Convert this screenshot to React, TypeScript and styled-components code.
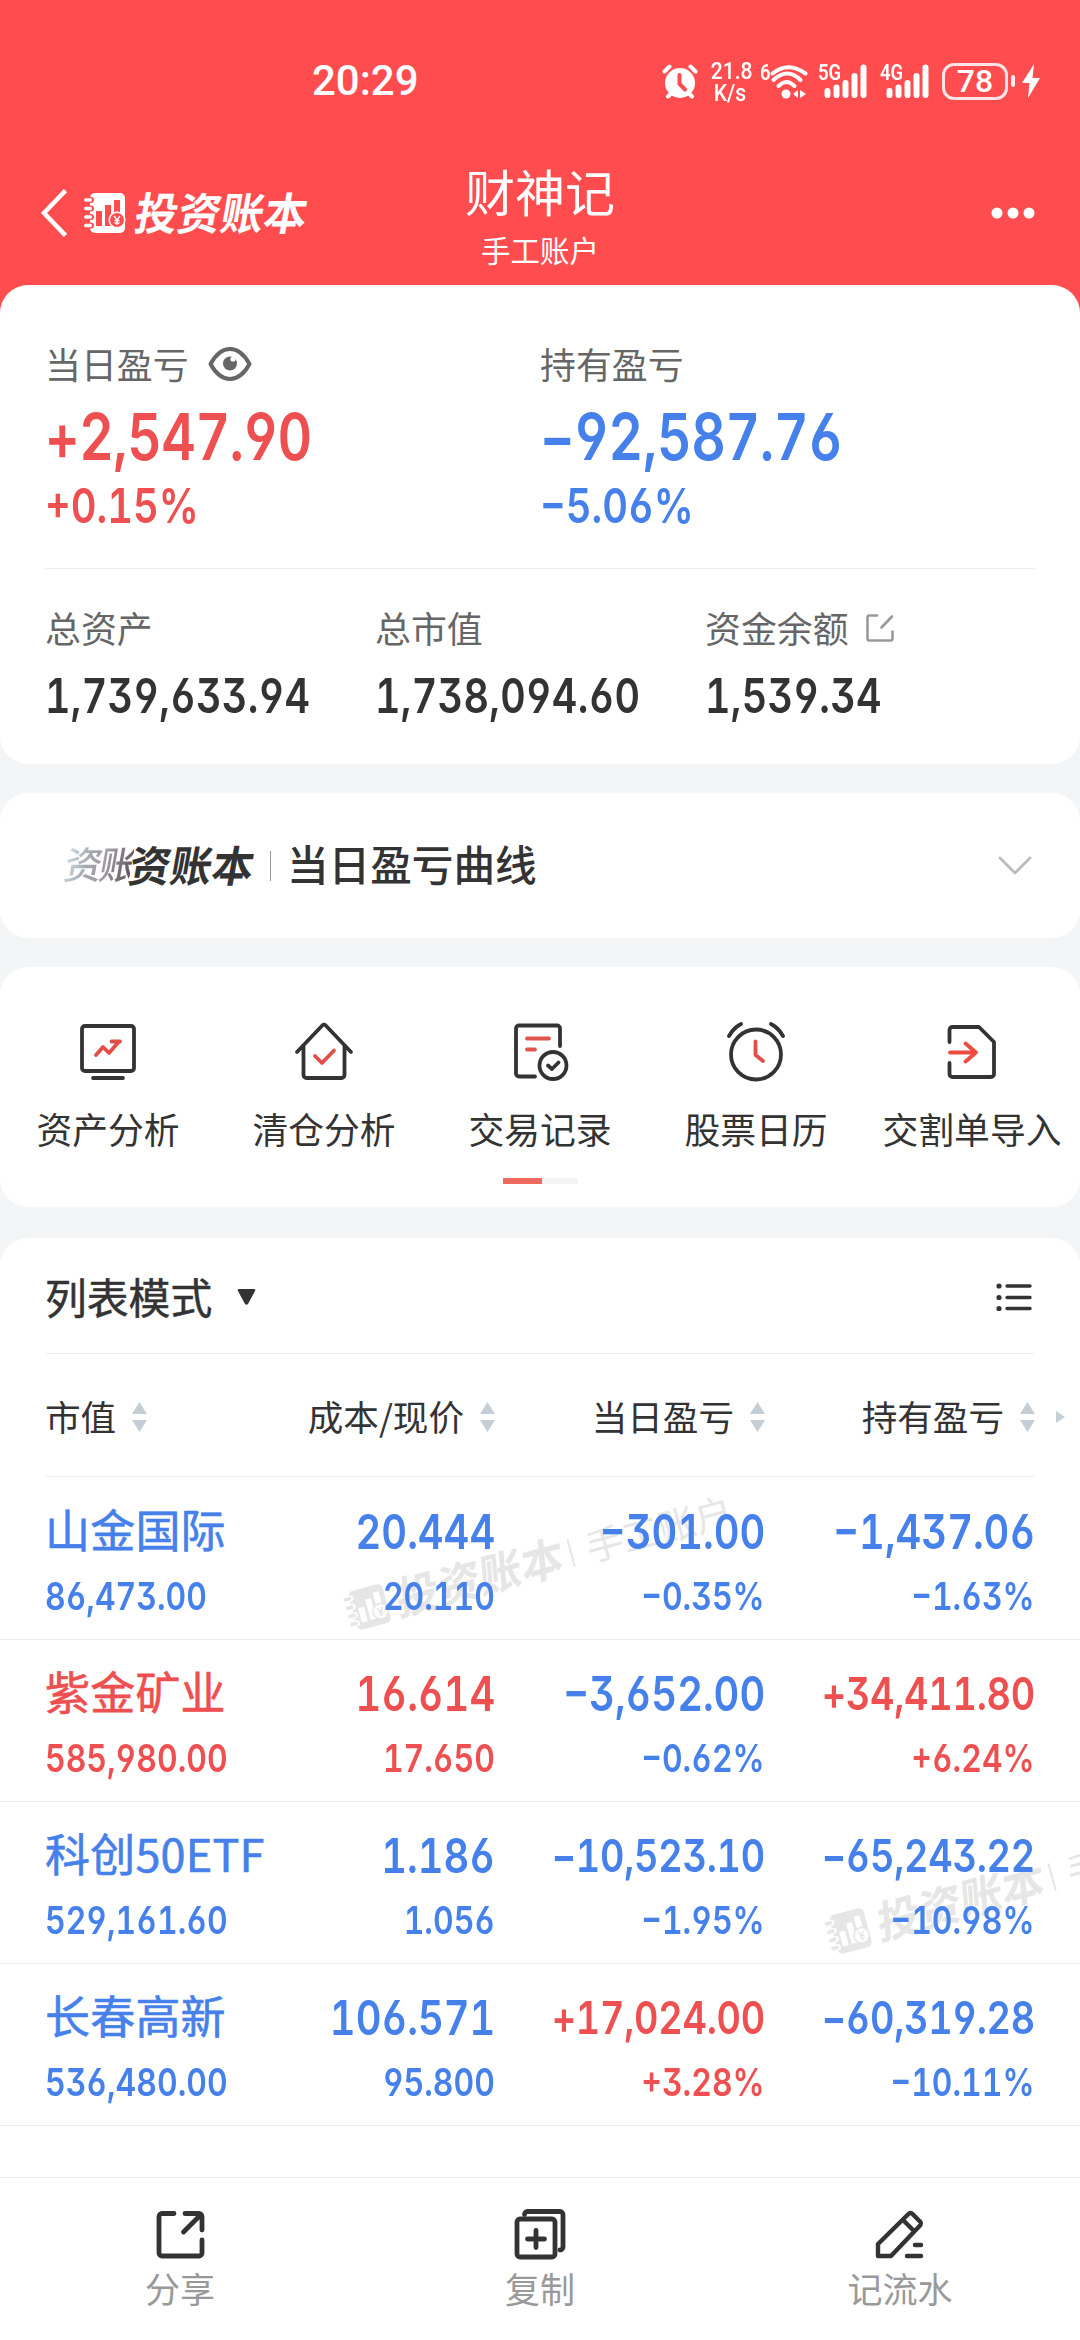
import React from "react";
import styled, { createGlobalStyle } from "styled-components";

const INK = "#333333";
const RED = "#ee4f50";
const BLUE = "#4680ea";
const CJK = `"Noto Sans CJK SC", "Noto Sans", sans-serif`;

const GlobalStyle = createGlobalStyle`
  * { box-sizing: border-box; }
  body { margin: 0; background: #f3f5f7; }
  svg { display: block; flex: none; }
`;

const Screen = styled.div`
  width: 1080px;
  height: 2340px;
  overflow: hidden;
  display: flex;
  flex-direction: column;
  background: #f3f5f7;
  color: ${INK};
  font-family: ${CJK};
`;

/* ---------- top area ---------- */

const TopArea = styled.header`
  flex: none;
  height: 325px;
  background: #ff4d4f;
  color: #fff;
`;

const StatusBar = styled.div`
  height: 160px;
  padding: 2px 40px 0 312px;
  display: flex;
  align-items: center;
  justify-content: space-between;
  font-family: Roboto, sans-serif;
`;

const Clock = styled.span`
  font-size: 42px;
  font-weight: 500;
  line-height: 50px;
`;

const StatusIcons = styled.div`
  display: flex;
  align-items: center;
  height: 50px;
`;

const NetSpeed = styled.div`
  width: 44px;
  margin: 1px 8px 0 10px;
  text-align: center;
  font-size: 24px;
  font-weight: 500;
  line-height: 22px;
  transform: scaleX(0.88);
`;

const Generation = styled.span<{ $w: number; $ml?: number }>`
  width: ${(p) => p.$w}px;
  margin-left: ${(p) => p.$ml ?? 0}px;
  align-self: flex-start;
  padding-top: 6px;
  font-size: 22px;
  font-weight: 600;
  line-height: 22px;
  white-space: nowrap;
  transform: scaleX(0.84);
  transform-origin: left center;
`;

const Battery = styled.div`
  width: 66px;
  height: 37px;
  margin-left: 12px;
  border: 3px solid rgba(255, 255, 255, 0.85);
  border-radius: 12px;
  display: flex;
  align-items: center;
  justify-content: center;
  font-size: 32px;
  font-weight: 500;
  line-height: 32px;
`;

const BatteryTip = styled.span`
  width: 4px;
  height: 12px;
  margin: 0 7px 0 3px;
  border-radius: 2px;
  background: rgba(255, 255, 255, 0.9);
`;

const NavBar = styled.div`
  height: 125px;
  padding: 0 40px;
  display: grid;
  grid-template-columns: 1fr 160px 1fr;
  align-items: start;
`;

const NavLeft = styled.div`
  display: flex;
  align-items: center;
  height: 106px;
  gap: 17px;
`;

const NavRight = styled(NavLeft)`
  justify-content: flex-end;
  padding-right: 4px;
`;

const TitleBlock = styled.div`
  display: flex;
  flex-direction: column;
  align-items: center;
`;

const Title = styled.h1`
  margin: 0;
  font-size: 50px;
  font-weight: 400;
  line-height: 60px;
`;

const Subtitle = styled.span`
  margin-top: 7px;
  font-size: 29.5px;
  line-height: 44px;
`;

const Brand = styled.span`
  display: flex;
  align-items: center;
  gap: 9px;
`;

const BrandText = styled.span`
  font-size: 43px;
  font-weight: 700;
  line-height: 44px;
  margin-top: -6px;
  white-space: nowrap;
  transform: skewX(-10deg) scaleY(1.03);
`;

/* ---------- cards ---------- */

const Card = styled.section<{ $h: number }>`
  flex: none;
  height: ${(p) => p.$h}px;
  border-radius: 28px;
  background: #fff;
`;

const SummaryCard = styled(Card)`
  margin-top: -40px;
  padding: 53px 45px 0;
`;

const Columns = styled.div<{ $n: number }>`
  display: grid;
  grid-template-columns: repeat(${(p) => p.$n}, 1fr);
`;

const Metric = styled.div`
  display: flex;
  flex-direction: column;
  align-items: flex-start;
`;

const MetricLabel = styled.div<{ $gap: number }>`
  height: 50px;
  display: flex;
  align-items: center;
  gap: ${(p) => p.$gap}px;
  font-size: 35.9px;
  line-height: 50px;
  color: #666;
`;

const Num = styled.span<{
  $size: number;
  $h: number;
  $mt?: number;
  $color?: string;
  $ls?: number;
  $right?: boolean;
}>`
  display: block;
  margin-top: ${(p) => p.$mt ?? 0}px;
  height: ${(p) => p.$h}px;
  line-height: ${(p) => p.$h}px;
  font-family: Inter, sans-serif;
  font-feature-settings: "tnum", "cv03", "cv04", "cv09";
  font-size: ${(p) => p.$size}px;
  font-weight: 580;
  letter-spacing: ${(p) => p.$ls ?? 0}px;
  white-space: nowrap;
  color: ${(p) => p.$color ?? INK};
  transform: scaleX(0.83);
  transform-origin: ${(p) => (p.$right ? "right" : "left")} center;
`;

const Rule = styled.div<{ $mt?: number; $mb?: number }>`
  height: 1px;
  margin: ${(p) => p.$mt ?? 0}px 0 ${(p) => p.$mb ?? 1}px;
  background: #ececec;
`;

const CurveCard = styled(Card)`
  margin-top: 29px;
  padding: 0 48px 0 65px;
  display: flex;
  align-items: center;
`;

const CurveBrand = styled.div`
  display: flex;
  align-items: center;
  width: 191px;
  height: 46px;
`;

const BrandGhost = styled.span`
  width: 67px;
  font-size: 38px;
  letter-spacing: -3px;
  font-weight: 500;
  line-height: 46px;
  margin-top: -5px;
  white-space: nowrap;
  color: transparent;
  background: linear-gradient(100deg, #d6e8ec 0%, #a3a8b2 35%, #a29aa3 60%, #5a5055 100%);
  background-clip: text;
  -webkit-background-clip: text;
  transform: skewX(-10deg);
`;

const BrandRest = styled(BrandText)`
  font-size: 41.5px;
  line-height: 46px;
  margin-left: -2px;
`;

const Divider = styled.span`
  width: 1px;
  height: 30px;
  margin: 0 16px 0 14px;
  background: #999;
`;

const CurveTitle = styled.h2`
  flex: 1;
  margin: -6px 0 0;
  font-size: 41.6px;
  font-weight: 500;
  line-height: 56px;
`;

const ShortcutCard = styled(Card)`
  margin-top: 29px;
  padding-top: 52px;
`;

const Shortcut = styled.div`
  display: flex;
  flex-direction: column;
  align-items: center;
  white-space: nowrap;
`;

const ShortcutLabel = styled.span`
  margin-top: 20px;
  font-size: 35.8px;
  line-height: 50px;
`;

const Pager = styled.div`
  width: 75px;
  height: 6px;
  margin: 25px auto 0;
  background: #f3f4f5;
`;

const PagerThumb = styled.div`
  width: 39px;
  height: 6px;
  background: #f0695f;
`;

/* ---------- holdings list ---------- */

const ListCard = styled(Card)`
  margin-top: 31px;
  position: relative;
  overflow: hidden;
  border-radius: 28px 28px 0 0;
  z-index: 0;
`;

const ListHeader = styled.div`
  padding: 0 45px;
`;

const ModeRow = styled.div`
  height: 115px;
  padding: 2px 3px 0 0;
  display: flex;
  align-items: center;
  justify-content: space-between;
`;

const Mode = styled.div`
  display: flex;
  align-items: center;
  gap: 25px;
  font-size: 41.8px;
  line-height: 56px;
  -webkit-text-stroke: 0.5px ${INK};
`;

const ModeLabel = styled.span`
  margin-top: -2px;
`;

const HeadRow = styled.div`
  height: 121px;
  padding-top: 2px;
  display: grid;
  grid-template-columns: 180px 270px 270px 270px;
  align-items: center;
  position: relative;
`;

const HeadCell = styled.div<{ $right?: boolean }>`
  display: flex;
  align-items: center;
  justify-content: ${(p) => (p.$right ? "flex-end" : "flex-start")};
  gap: 16px;
  font-size: 35.6px;
  line-height: 50px;
  white-space: nowrap;
`;

const HeadText = styled.span`
  margin-top: -2px;
`;

const MoreArrow = styled.span`
  position: absolute;
  right: -30px;
  top: 56px;
`;

const Row = styled.div`
  height: 162px;
  padding: 29px 45px 0;
  display: grid;
  grid-template-columns: 180px 270px 270px 270px;
  border-bottom: 1px solid #ececec;
`;

const Cell = styled.div<{ $right?: boolean }>`
  display: flex;
  flex-direction: column;
  align-items: ${(p) => (p.$right ? "flex-end" : "flex-start")};
`;

const StockName = styled.span<{ $color: string }>`
  height: 50px;
  line-height: 43px;
  font-size: 45px;
  letter-spacing: 0.2px;
  -webkit-text-stroke: 0.6px ${(p) => p.$color};
  white-space: nowrap;
  color: ${(p) => p.$color};
`;

const Watermark = styled.div<{ $x: number; $y: number }>`
  position: absolute;
  z-index: -1;
  left: ${(p) => p.$x}px;
  top: ${(p) => p.$y}px;
  display: flex;
  align-items: center;
  height: 50px;
  color: #e6e6e6;
  transform: rotate(-15deg);
  transform-origin: left center;
  white-space: nowrap;
`;

const WatermarkLine = styled.span`
  width: 2px;
  height: 28px;
  margin: 0 15px 0 7px;
  background: #e6e6e6;
`;

const WatermarkText = styled.span`
  font-size: 37.5px;
  line-height: 46px;
  margin-top: -4px;
`;

/* ---------- bottom bar ---------- */

const BottomBar = styled.nav`
  flex: none;
  height: 163px;
  padding-top: 30px;
  border-top: 1px solid #ececec;
  background: #fff;
  display: grid;
  grid-template-columns: repeat(3, 1fr);
`;

const Action = styled.div`
  display: flex;
  flex-direction: column;
  align-items: center;
`;

const ActionLabel = styled.span`
  margin-top: 3px;
  font-size: 35px;
  line-height: 50px;
  color: #999;
`;

/* ---------- icons ---------- */

const AlarmIcon = () => (
  <svg width="36" height="36" viewBox="0 0 36 36" fill="none">
    <circle cx="18" cy="20" r="15" fill="#fff" />
    <path d="M2.5 8.5 7.5 3.5M33.5 8.5 28.5 3.5M6 33.5l4-4M30 33.5l-4-4" stroke="#fff" strokeWidth="4" strokeLinecap="round" />
    <path d="M17.5 12v9l5.500 5.500" stroke="#ff4d4f" strokeWidth="4" strokeLinecap="round" />
  </svg>
);

const WifiIcon = () => (
  <svg width="38" height="36" viewBox="0 0 38 36" fill="none" stroke="#fff">
    <path d="M2.500 10.500Q18 -2 35.500 10.500" strokeWidth="4" strokeLinecap="round" />
    <path d="M3.500 17Q17.500 4 30.500 17" strokeWidth="4" strokeLinecap="round" />
    <path d="M8.500 23Q16.500 15 24.500 23" strokeWidth="4" strokeLinecap="round" />
    <circle cx="16" cy="31" r="4.500" fill="#fff" stroke="none" />
    <path d="M28 27v8l-5-4zM30 27v8l6-4z" fill="#fff" stroke="none" />
  </svg>
);

const SignalIcon = () => (
  <svg width="44" height="36" viewBox="0 0 44 36" stroke="#fff" strokeWidth="6" strokeLinecap="round">
    <path d="M3.500 28v4M12.500 24.500V32M21.500 20V32M30.500 13V32M39.500 4.500V32" />
  </svg>
);

const BoltIcon = () => (
  <svg width="18" height="36" viewBox="0 0 18 36" fill="#fff">
    <path d="M12 1 0 20h7.500L6 35 18 15h-7.500z" />
  </svg>
);

const BackIcon = () => (
  <svg width="27" height="48" viewBox="0 0 27 48" fill="none" stroke="#fff" strokeWidth="4.500">
    <path d="M25.500 1.500 4 24l21.500 22.500" />
  </svg>
);

const LedgerIcon = ({ color, hole }: { color: string; hole: string }) => (
  <svg width="43" height="42" viewBox="0 0 43 42">
    <rect x="6" y="1" width="35" height="40" rx="5" fill={color} />
    {[8, 16.5, 25, 33.5].map((y) => (
      <g key={y}>
        <rect x="4" y={y - 3} width="6" height="6" rx="3" fill={hole} />
        <rect x="0" y={y - 1.8} width="8" height="3.600" rx="1.800" fill={color} />
      </g>
    ))}
    <path d="M12 19h6v15h-6zM21 13h6v21h-6zM30 8h6v20h-6z" fill={hole} />
    <circle cx="33" cy="28" r="8.500" fill={color} />
    <circle cx="33" cy="28" r="7" fill={hole} />
    <path d="m30 24 3 4 3-4M33 28v5M30.500 28.500h5M30.500 31h5" stroke={color} strokeWidth="1.300" fill="none" />
  </svg>
);

const DotsIcon = () => (
  <svg width="46" height="12" viewBox="0 0 46 12" fill="#fff">
    <circle cx="7" cy="6" r="5.500" />
    <circle cx="23" cy="6" r="5.500" />
    <circle cx="39" cy="6" r="5.500" />
  </svg>
);

const EyeIcon = () => (
  <svg width="44" height="36" viewBox="0 0 44 36" fill="none">
    <path d="M2.500 19C8 9 14.500 4 22 4s14 5 19.500 15C36 29 29.500 34 22 34S8 29 2.500 19z" stroke="#666" strokeWidth="4" strokeLinejoin="round" />
    <circle cx="22" cy="18.500" r="7" fill="#666" />
    <circle cx="25" cy="14" r="2.600" fill="#fff" />
  </svg>
);

const EditIcon = () => (
  <svg width="28" height="30" viewBox="0 -2 28 30" fill="none" stroke="#999" strokeWidth="2.600" strokeLinecap="round" strokeLinejoin="round">
    <path d="M11 1.500H3A1.500 1.500 0 0 0 1.500 3v22A1.500 1.500 0 0 0 3 26.500h22A1.500 1.500 0 0 0 26.500 25v-7.500M15.500 13.500 26 2.500" />
  </svg>
);

const ChevronDown = () => (
  <svg width="34" height="20" viewBox="0 0 34 20" fill="none" stroke="#bbb" strokeWidth="2.800" strokeLinecap="round" strokeLinejoin="round">
    <path d="m2 2 15 15L32 2" />
  </svg>
);

const shortcutSvg = { width: 64, height: 64, viewBox: "0 0 64 64", fill: "none", strokeWidth: 3.8, strokeLinecap: "round", strokeLinejoin: "round" } as const;

const AnalysisIcon = () => (
  <svg {...shortcutSvg} stroke={INK}>
    <rect x="6" y="7" width="52" height="45" rx="3" />
    <path d="M17 59h30" />
    <path d="m20 36 7-8 6 6 10-11.500M35.500 22.500h8.500" stroke="#e04f48" />
  </svg>
);

const HouseIcon = () => (
  <svg {...shortcutSvg} stroke={INK}>
    <path d="M5 33 30.500 6.300a2 2 0 0 1 3 0L59 33M11.500 27v29a3 3 0 0 0 3 3h35a3 3 0 0 0 3-3V27" />
    <path d="m23 37 7 7 12-12.500" stroke="#e04f48" />
  </svg>
);

const RecordIcon = () => (
  <svg {...shortcutSvg} stroke={INK}>
    <path d="M27 57.500H11a3 3 0 0 1-3-3V9.500a3 3 0 0 1 3-3h38a3 3 0 0 1 3 3V27" />
    <circle cx="45" cy="46.500" r="13.500" />
    <path d="m40 46.500 4 3.500 6.500-6.500" />
    <path d="M19 19.500h22M19 30.500h8" stroke="#e0554d" />
  </svg>
);

const AlarmClockIcon = () => (
  <svg {...shortcutSvg} stroke={INK}>
    <circle cx="32" cy="35.500" r="25" />
    <path d="M5 17Q9.500 9 17 5M59 17Q54.500 9 47 5" />
    <path d="M31.500 22.500V36l7.500 6" stroke="#e0504d" />
  </svg>
);

const ImportIcon = () => (
  <svg {...shortcutSvg} stroke={INK}>
    <path d="M9.500 23V11a3 3 0 0 1 3-3H39l15 15v32a3 3 0 0 1-3 3H12.500a3 3 0 0 1-3-3V44" />
    <path d="M10 33.500h25M25.500 24.500 36 33.500l-10.500 9" stroke="#f04a40" />
  </svg>
);

const CaretDown = () => (
  <svg width="20" height="16" viewBox="0 0 20 16" fill={INK}>
    <path d="M2 0h15q2 0 1 2l-7 13q-1.500 1.500-3 0L1 2q-1-2 1-2z" />
  </svg>
);

const ListIcon = () => (
  <svg width="36" height="30" viewBox="0 0 36 30" stroke={INK} strokeLinecap="round">
    <path d="M11 4h23M11 15.500h23M11 26.500h23" strokeWidth="3.400" />
    <path d="M3 4h.01M3 15.500h.01M3 26.500h.01" strokeWidth="5.200" />
  </svg>
);

const SortIcon = () => (
  <svg width="15" height="30" viewBox="0 0 15 30" fill="#c6ced5">
    <path d="M7.500 0 15 12H0zM7.500 30 15 18H0z" />
  </svg>
);

const RightTriangle = () => (
  <svg width="9" height="12" viewBox="0 0 9 12" fill="#c6ced5">
    <path d="M0 0 9 6 0 12z" />
  </svg>
);

const actionSvg = { width: 52, height: 52, viewBox: "0 0 52 52", fill: "none", stroke: INK, strokeWidth: 4.8, strokeLinecap: "round", strokeLinejoin: "round" } as const;

const ShareIcon = () => (
  <svg {...actionSvg}>
    <path d="M20 5.500H8a3 3 0 0 0-3 3V45a3 3 0 0 0 3 3h37a3 3 0 0 0 3-3V32M31 5.500h14a3 3 0 0 1 3 3V22M46 7.500 29.500 24" />
  </svg>
);

const CopyIcon = () => (
  <svg {...actionSvg}>
    <rect x="3" y="11" width="38" height="38" rx="3" />
    <path d="M10.500 6.500a3 3 0 0 1 3-3H46a3 3 0 0 1 3 3V39a3 3 0 0 1-3 3M22 22.500v17M13.500 31h17" />
  </svg>
);

const PencilIcon = () => (
  <svg {...actionSvg} strokeWidth={4.4}>
    <path d="M4 48V36L35 5.500q1.500-1 3 0l8.500 8.500q1 1.500 0 3L17 48zM29 12l11 11" />
    <path d="M41 37h6M33 48h14" strokeWidth="4.500" />
  </svg>
);

/* ---------- data ---------- */

const shortcuts = [
  { label: "资产分析", Icon: AnalysisIcon },
  { label: "清仓分析", Icon: HouseIcon },
  { label: "交易记录", Icon: RecordIcon },
  { label: "股票日历", Icon: AlarmClockIcon },
  { label: "交割单导入", Icon: ImportIcon },
];

const totals = [
  { label: "总资产", value: "1,739,633.94" },
  { label: "总市值", value: "1,738,094.60" },
  { label: "资金余额", value: "1,539.34", editable: true },
];

const columns = ["市值", "成本/现价", "当日盈亏", "持有盈亏"];

const holdings = [
  { name: "山金国际", value: "86,473.00", cost: "20.444", price: "20.110", day: "−301.00", dayPct: "−0.35%", held: "−1,437.06", heldPct: "−1.63%" },
  { name: "紫金矿业", value: "585,980.00", cost: "16.614", price: "17.650", day: "−3,652.00", dayPct: "−0.62%", held: "+34,411.80", heldPct: "+6.24%" },
  { name: "科创50ETF", value: "529,161.60", cost: "1.186", price: "1.056", day: "−10,523.10", dayPct: "−1.95%", held: "−65,243.22", heldPct: "−10.98%" },
  { name: "长春高新", value: "536,480.00", cost: "106.571", price: "95.800", day: "+17,024.00", dayPct: "+3.28%", held: "−60,319.28", heldPct: "−10.11%" },
];

const actions = [
  { label: "分享", Icon: ShareIcon },
  { label: "复制", Icon: CopyIcon },
  { label: "记流水", Icon: PencilIcon },
];

const tone = (v: string) => (v.startsWith("+") ? RED : BLUE);

const Pair = ({ top, bottom, color }: { top: string; bottom: string; color: string }) => (
  <Cell $right>
    <Num $right $size={top.length > 9 ? 45.5 : 48} $ls={top.length > 9 ? -0.3 : 0} $h={50} $color={color}>{top}</Num>
    <Num $right $size={38.5} $h={40} $mt={19} $color={color}>{bottom}</Num>
  </Cell>
);

const Logo = ({ color, hole }: { color: string; hole: string }) => (
  <Brand>
    <LedgerIcon color={color} hole={hole} />
    <BrandText>投资账本</BrandText>
  </Brand>
);

export default function App() {
  return (
    <Screen>
      <GlobalStyle />
      <TopArea>
        <StatusBar>
          <Clock>20:29</Clock>
          <StatusIcons>
            <AlarmIcon />
            <NetSpeed>21.8<br />K/s</NetSpeed>
            <Generation $w={10}>6</Generation>
            <WifiIcon />
            <Generation $w={6} $ml={10}>5G</Generation>
            <SignalIcon />
            <Generation $w={6} $ml={12}>4G</Generation>
            <SignalIcon />
            <Battery>78</Battery>
            <BatteryTip />
            <BoltIcon />
          </StatusIcons>
        </StatusBar>
        <NavBar>
          <NavLeft>
            <BackIcon />
            <Logo color="#fff" hole="#ff4d4f" />
          </NavLeft>
          <TitleBlock>
            <Title>财神记</Title>
            <Subtitle>手工账户</Subtitle>
          </TitleBlock>
          <NavRight>
            <DotsIcon />
          </NavRight>
        </NavBar>
      </TopArea>

      <SummaryCard $h={479}>
        <Columns $n={2}>
          <Metric>
            <MetricLabel $gap={19}>当日盈亏<EyeIcon /></MetricLabel>
            <Num $size={64.5} $h={64} $mt={17} $ls={-0.6} $color={RED}>+2,547.90</Num>
            <Num $size={48} $h={48} $mt={13} $color={RED}>+0.15%</Num>
          </Metric>
          <Metric>
            <MetricLabel $gap={0}>持有盈亏</MetricLabel>
            <Num $size={64.5} $h={64} $mt={17} $ls={-0.4} $color={BLUE}>−92,587.76</Num>
            <Num $size={48} $h={48} $mt={13} $color={BLUE}>−5.06%</Num>
          </Metric>
        </Columns>
        <Rule $mt={38} $mb={33} />
        <Columns $n={3}>
          {totals.map((t) => (
            <Metric key={t.label}>
              <MetricLabel $gap={17}>{t.label}{t.editable && <EditIcon />}</MetricLabel>
              <Num $size={47.5} $h={50} $mt={19} $ls={0.4}>{t.value}</Num>
            </Metric>
          ))}
        </Columns>
      </SummaryCard>

      <CurveCard $h={145}>
        <CurveBrand>
          <BrandGhost>资账</BrandGhost>
          <BrandRest>资账本</BrandRest>
        </CurveBrand>
        <Divider />
        <CurveTitle>当日盈亏曲线</CurveTitle>
        <ChevronDown />
      </CurveCard>

      <ShortcutCard $h={240}>
        <Columns $n={5}>
          {shortcuts.map(({ label, Icon }) => (
            <Shortcut key={label}>
              <Icon />
              <ShortcutLabel>{label}</ShortcutLabel>
            </Shortcut>
          ))}
        </Columns>
        <Pager><PagerThumb /></Pager>
      </ShortcutCard>

      <ListCard $h={939}>
        <Watermark $x={347} $y={350}>
          <Logo color="#e6e6e6" hole="#fff" />
          <WatermarkLine />
          <WatermarkText>手工账户</WatermarkText>
        </Watermark>
        <Watermark $x={828} $y={674}>
          <Logo color="#e6e6e6" hole="#fff" />
          <WatermarkLine />
          <WatermarkText>手工账户</WatermarkText>
        </Watermark>
        <ListHeader>
          <ModeRow>
            <Mode><ModeLabel>列表模式</ModeLabel><CaretDown /></Mode>
            <ListIcon />
          </ModeRow>
          <Rule />
          <HeadRow>
            {columns.map((c, i) => (
              <HeadCell key={c} $right={i > 0}>
                <HeadText>{c}</HeadText>
                <SortIcon />
              </HeadCell>
            ))}
            <MoreArrow><RightTriangle /></MoreArrow>
          </HeadRow>
          <Rule />
        </ListHeader>
        {holdings.map((h) => (
          <Row key={h.name}>
            <Cell>
              <StockName $color={tone(h.held)}>{h.name}</StockName>
              <Num $size={38.5} $h={40} $mt={19} $color={tone(h.held)}>{h.value}</Num>
            </Cell>
            <Pair top={h.cost} bottom={h.price} color={tone(h.held)} />
            <Pair top={h.day} bottom={h.dayPct} color={tone(h.day)} />
            <Pair top={h.held} bottom={h.heldPct} color={tone(h.held)} />
          </Row>
        ))}
      </ListCard>

      <BottomBar>
        {actions.map(({ label, Icon }) => (
          <Action key={label}>
            <Icon />
            <ActionLabel>{label}</ActionLabel>
          </Action>
        ))}
      </BottomBar>
    </Screen>
  );
}
